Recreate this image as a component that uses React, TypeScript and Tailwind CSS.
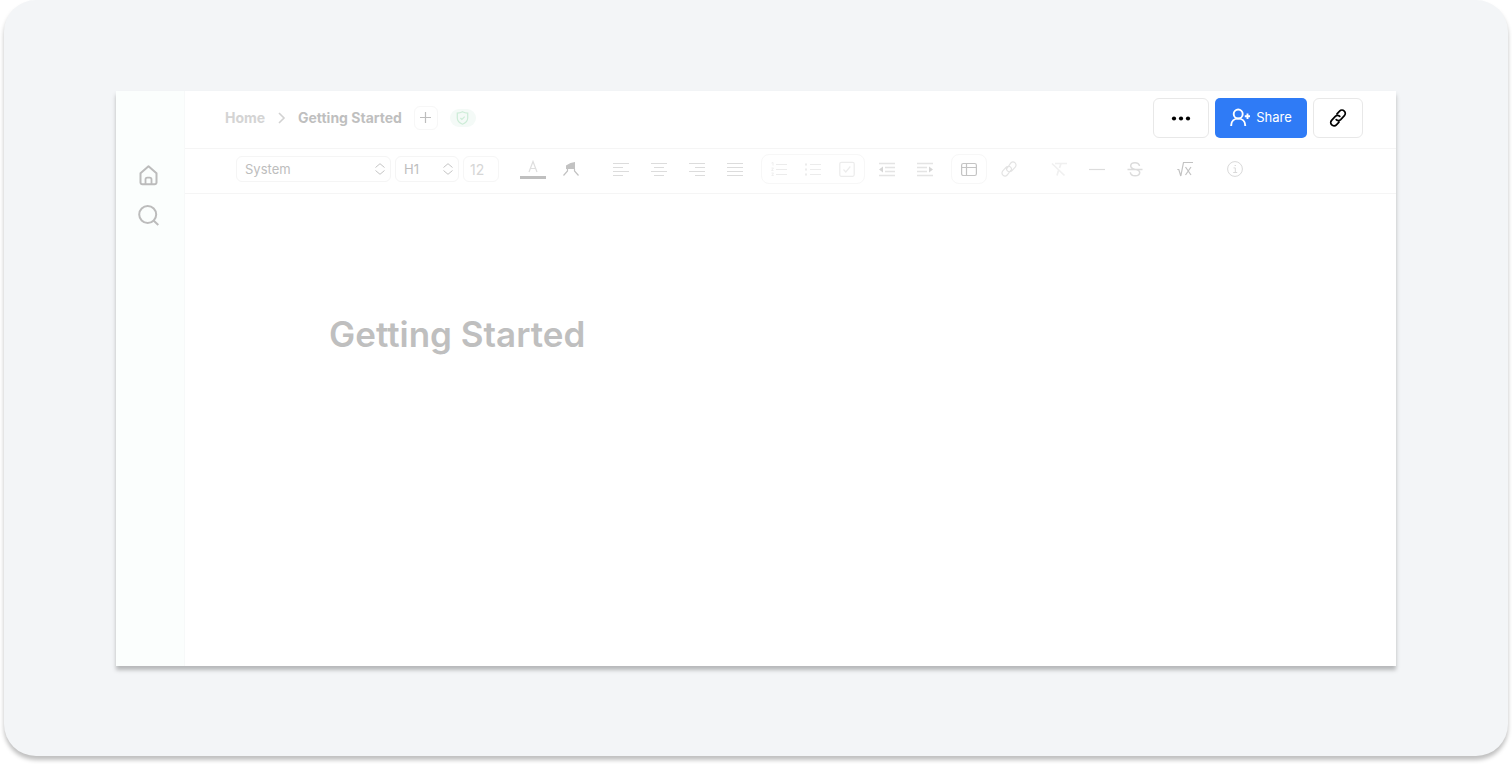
import type { ReactNode } from "react";

function Icon({ size = 16, width = 1.2, className = "", children }: { size?: number; width?: number; className?: string; children: ReactNode }) {
  return (
    <svg width={size} height={size} viewBox={`0 0 ${size} ${size}`} fill="none" stroke="currentColor" strokeWidth={width} className={`block shrink-0 ${className}`} aria-hidden="true">
      {children}
    </svg>
  );
}

function Tool({ label, className = "", children }: { label: string; className?: string; children: ReactNode }) {
  return (
    <button type="button" aria-label={label} className={`flex h-7 w-[26px] shrink-0 items-center justify-center ${className}`}>
      {children}
    </button>
  );
}

function Picker({ label, value, className }: { label: string; value: string; className: string }) {
  return (
    <label className={`relative block shrink-0 ${className}`}>
      <select aria-label={label} className="h-[26px] w-full appearance-none rounded-md border border-[#f5f5f5] bg-white pl-2 text-[13px] text-[#bdbdbd]">
        <option>{value}</option>
      </select>
      <svg width="12" height="12" viewBox="0 0 12 12" fill="none" stroke="#c4c4c4" className="pointer-events-none absolute top-[7px] right-[5px]" aria-hidden="true">
        <path d="M1.500 4.500 6 .7l4.500 3.800M1.500 7.500 6 11.300l4.500-3.800" />
      </svg>
    </label>
  );
}

function Sidebar() {
  return (
    <nav aria-label="Main" className="flex w-[69px] shrink-0 flex-col items-center gap-4 border-r border-[#f7f9f9] bg-[#fbfefd] pt-[72px] pr-1 text-[#bcbcbc]">
      <a href="#home" aria-label="Home" className="flex size-6 items-center justify-center">
        <Icon size={24} width={2}>
          <path d="M4.500 10.200 12.500 3.200l8 7V19.500a1.800 1.800 0 0 1-1.800 1.800H6.300a1.800 1.800 0 0 1-1.800-1.800Z" strokeLinejoin="round" />
          <path d="M9.500 21v-4.500a1.800 1.800 0 0 1 1.800-1.800h2.400a1.800 1.800 0 0 1 1.800 1.800V21" strokeWidth="1.800" />
        </Icon>
      </a>
      <button type="button" aria-label="Search" className="flex size-6 items-center justify-center">
        <Icon size={24} width={2}>
          <circle cx="11.700" cy="11.500" r="8.500" />
          <path d="m17.500 17.500 4.800 4.500" />
        </Icon>
      </button>
    </nav>
  );
}

function Header() {
  return (
    <header className="flex h-[58px] items-center border-b border-[#f5f5f5] pr-[33px] pb-[3px] pl-10">
      <nav aria-label="Breadcrumb" className="flex items-center text-sm font-bold">
        <a href="#home" className="w-[41px] whitespace-nowrap text-[#d4d4d4]">Home</a>
        <Icon size={16} width={1.600} className="mx-2 text-[#d2d2d2]">
          <path d="m5 3 5 5-5 5" />
        </Icon>
        <a href="#getting-started" className="w-[104px] whitespace-nowrap text-[#bfbfbf]">Getting Started</a>
      </nav>
      <button type="button" aria-label="Add page" className="ml-3 flex size-6 items-center justify-center rounded-md border border-[#f7f7f7] text-[#bdbdbd]">
        <Icon size={12}>
          <path d="M5.500 0v11M0 5.500h11" />
        </Icon>
      </button>
      <span role="img" aria-label="Verified" className="ml-3 flex h-[18px] w-[26px] items-center justify-center rounded-full bg-[#f4faf7] text-[#cdecd7]">
        <Icon size={14}>
          <path d="M6.500.8c1.800 1 3.400 1.400 5.200 1.400v4.800c0 3-2.200 5-5.200 6.200C3.500 12 1.300 10 1.300 7V2.200C3.100 2.200 4.700 1.800 6.500.8Z" />
          <path d="m4.400 7 1.500 1.500 2.800-2.900" />
        </Icon>
      </span>
      <div className="ml-auto flex gap-1.5">
        <button type="button" aria-label="More options" className="flex h-10 w-14 items-center justify-center rounded-md border border-[#e8e8e8] text-black">
          <svg width="20" height="6" viewBox="0 0 20 6" fill="currentColor" aria-hidden="true">
            <circle cx="3" cy="3.500" r="2.100" />
            <circle cx="10" cy="3.500" r="2.100" />
            <circle cx="17" cy="3.500" r="2.100" />
          </svg>
        </button>
        <button type="button" className="flex h-10 w-[92px] items-center justify-center gap-1.5 rounded-[5px] bg-[#2f7bf6] text-[13px] text-white">
          <Icon size={20} width={1.900}>
            <circle cx="8.200" cy="6" r="4.500" />
            <path d="M1.200 18v-.7c0-4 3-6.700 7-6.700s7 2.700 7 6.700v.7M17.500 5.500v5.400M14.800 8.200h5.400" />
          </Icon>
          Share
        </button>
        <button type="button" aria-label="Copy link" className="flex h-10 w-[50px] items-center justify-center rounded-md border border-[#e8e8e8] text-black">
          <Icon size={18} width={1.700}>
            <path d="m8 4.800 2.600-2.600a3.200 3.200 0 0 1 4.800 4.500l-3.700 3.900a3.200 3.200 0 0 1-4.500 0M10 13.200l-2.600 2.600a3.200 3.200 0 0 1-4.800-4.500l3.700-3.900a3.200 3.200 0 0 1 4.500 0" strokeLinecap="round" />
          </Icon>
        </button>
      </div>
    </header>
  );
}

function Toolbar() {
  return (
    <div role="toolbar" aria-label="Formatting" className="flex h-[45px] items-center border-b border-[#f5f5f5] pb-1 pl-[51px]">
      <div className="flex items-center gap-1">
        <Picker label="Font" value="System" className="w-[155px]" />
        <Picker label="Text style" value="H1" className="w-16" />
        <input aria-label="Font size" defaultValue="12" className="h-[26px] w-9 rounded-md border border-[#f6f6f6] pl-1.5 text-sm text-[#d6d6d6]" />
      </div>
      <div className="ml-[21px] flex gap-3">
        <Tool label="Text color">
          <svg width="26" height="20" viewBox="0 0 26 20" fill="none" aria-hidden="true">
            <path d="m9 13 4-10.500L17 13M10.400 9.500h5.200" stroke="#dedede" strokeWidth="1.200" />
            <path d="M0 17h26v3H0z" fill="#bfbfbf" />
          </svg>
        </Tool>
        <Tool label="Highlight" className="text-[#c2c2c2]">
          <Icon>
            <path d="M3 4.500 7.500 2l4.500-1v7H3Z" fill="currentColor" stroke="none" />
            <path d="M4.500 8v2L.5 14.500M11.500 8v2l4 4.500" />
          </Icon>
        </Tool>
      </div>
      <div className="ml-6 flex gap-3 text-[#dcdcdc]">
        <Tool label="Align left"><Icon><path d="M0 2.500h16M0 6.500h10M0 10.500h16M0 14.500h10" /></Icon></Tool>
        <Tool label="Align center"><Icon><path d="M0 2.500h16M3 6.500h10M0 10.500h16M3 14.500h10" /></Icon></Tool>
        <Tool label="Align right"><Icon><path d="M0 2.500h16M6 6.500h10M0 10.500h16M6 14.500h10" /></Icon></Tool>
        <Tool label="Justify"><Icon><path d="M0 2.500h16M0 6.500h16M0 10.500h16M0 14.500h16" /></Icon></Tool>
      </div>
      <div className="ml-[13px] flex w-[104px] justify-center gap-2 rounded-lg border border-[#f7f7f7] text-[#ececec]">
        <Tool label="Numbered list">
          <Icon>
            <path d="M5 3.500h11M5 8.500h11M5 13.500h11" />
            <path d="M.5 2 2 1.500v3M.5 7h2L.5 9.500h2M.5 12h2l-1 1.200 1 1.300h-2" strokeWidth=".9" />
          </Icon>
        </Tool>
        <Tool label="Bulleted list"><Icon><path d="M5 3.500h11M5 8.500h11M5 13.500h11" /><path d="M0 3.500h2M0 8.500h2M0 13.500h2" strokeWidth="1.800" /></Icon></Tool>
        <Tool label="Checklist"><Icon><rect x=".8" y="1.300" width="14.400" height="14" rx="1.500" /><path d="m4.500 8.500 2.300 2.500 4.500-5.500" /></Icon></Tool>
      </div>
      <div className="ml-[9px] flex gap-3 text-[#d6d6d6]">
        <Tool label="Outdent">
          <Icon><path d="M0 2.500h16M6 6.500h10M6 10.500h10M0 14.500h16" stroke="#e4e4e4" strokeWidth="1.500" /><path d="M0 8.500 4 5.500v6Z" fill="currentColor" stroke="none" /></Icon>
        </Tool>
        <Tool label="Indent">
          <Icon><path d="M0 2.500h16M0 6.500h10M0 10.500h10M0 14.500h16" stroke="#e4e4e4" strokeWidth="1.500" /><path d="m16 8.500-4-3v6Z" fill="currentColor" stroke="none" /></Icon>
        </Tool>
      </div>
      <div className="ml-[13px] flex w-9 justify-center rounded-lg border border-[#f7f7f7] text-[#c4c4c4]">
        <Tool label="Table"><Icon><rect x=".6" y="2.500" width="14.800" height="12" rx="1.800" /><path d="M.6 6.500h14.800M5.500 2.500v12" /></Icon></Tool>
      </div>
      <Tool label="Insert link" className="ml-[9px] text-[#e3e3e3]">
        <Icon><path d="M6 7.500 9.800 2a3 3 0 0 1 4.400 4.200l-3.400 3.600a3 3 0 0 1-4.400 0 3 3 0 0 1 0-4.100M10 9l-3.800 5a3 3 0 0 1-4.400-4.200L5.200 6.200a3 3 0 0 1 4.400 0 3 3 0 0 1 0 4.100" /></Icon>
      </Tool>
      <div className="ml-6 flex gap-3 text-[#dcdcdc]">
        <Tool label="Clear formatting" className="text-[#f0f0f0]"><Icon><path d="M4 2.500h12M10 2.500 8.500 7M7.500 9.500 6 14.500M1 2.500l12.500 12" strokeWidth="1.700" /></Icon></Tool>
        <Tool label="Horizontal rule" className="text-[#dcdcdc]"><Icon><path d="M0 8.500h16" /></Icon></Tool>
        <Tool label="Strikethrough"><Icon width={1.500}><path d="M12.500 5C12.200 3 10.500 1.800 8 1.800S3.700 3 3.700 5c0 4.500 9 2.300 9 6.500 0 2-1.700 3.300-4.600 3.300-2.800 0-4.600-1.300-4.800-3.500M.5 8.500h15" /></Icon></Tool>
      </div>
      <Tool label="Formula" className="ml-6 text-[#c2c2c2]"><Icon><path d="M.3 8.500h1.500l2 6.500L6.500 1.500H16M8.500 6l5.500 8M14 6l-5.500 8" /></Icon></Tool>
      <Tool label="Information" className="ml-6 text-[#d9d9d9]"><Icon width={1}><circle cx="8" cy="8" r="7.400" /><path d="M6.500 6.900h1.800v4.600M6.200 11.500h4M7.600 4.500h1.300" /></Icon></Tool>
    </div>
  );
}

export default function App() {
  return (
    <div className="bg-white px-1 pb-2 font-['Inter','Liberation_Sans',sans-serif]">
      <div className="rounded-[32px] bg-[#f3f5f7] px-28 pt-[91px] pb-[90px] shadow-[0_4px_4px_rgba(0,0,0,0.25)]">
        <div className="flex min-h-[575px] bg-white shadow-[0_4px_4px_rgba(0,0,0,0.25)]">
          <Sidebar />
          <div className="min-w-0 flex-1">
            <Header />
            <Toolbar />
            <main className="pt-[118px] pl-36">
              <h1 className="text-[35px] leading-[44px] font-semibold text-[#bfbfbf]">Getting Started</h1>
            </main>
          </div>
        </div>
      </div>
    </div>
  );
}
